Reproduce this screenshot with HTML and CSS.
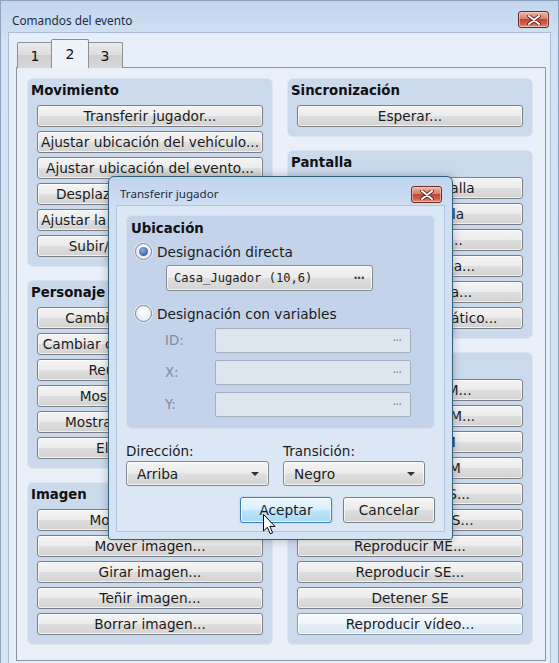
FILE: index.html
```html
<!DOCTYPE html>
<html lang="es">
<head>
<meta charset="utf-8">
<title>Comandos del evento</title>
<link rel="stylesheet" href="styles.css">
</head>
<body>
<div class="win">
  <div class="titlebar">
    <span class="title">Comandos del evento</span>
    <span class="close-btn main-close">
      <svg width="14" height="10" viewBox="0 0 14 10"><path d="M2 1 L12 9 M12 1 L2 9" stroke="#5a1f18" stroke-width="3.6" stroke-linecap="round"/><path d="M2 1 L12 9 M12 1 L2 9" stroke="#fff" stroke-width="2" stroke-linecap="round"/></svg>
    </span>
  </div>
  <div class="client">
    <div class="tabs">
      <div class="tab">1</div>
      <div class="tab active">2</div>
      <div class="tab">3</div>
    </div>
    <div class="panel">
      <div class="col">
        <div class="group">
          <div class="ghead">Movimiento</div>
          <div class="btns">
            <div class="btn">Transferir jugador...</div>
            <div class="btn">Ajustar ubicación del vehículo...</div>
            <div class="btn">Ajustar ubicación del evento...</div>
            <div class="btn">Desplazamiento de mapa...</div>
            <div class="btn">Ajustar la ruta de movimiento...</div>
            <div class="btn">Subir/Bajar del vehículo</div>
          </div>
        </div>
        <div class="group">
          <div class="ghead">Personaje</div>
          <div class="btns">
            <div class="btn">Cambiar transparencia...</div>
            <div class="btn">Cambiar comitiva del jugador...</div>
            <div class="btn">Reunir seguidores</div>
            <div class="btn">Mostrar animación...</div>
            <div class="btn">Mostrar icono de globo...</div>
            <div class="btn">Eliminar evento</div>
          </div>
        </div>
        <div class="group">
          <div class="ghead">Imagen</div>
          <div class="btns">
            <div class="btn">Mostrar imagen...</div>
            <div class="btn">Mover imagen...</div>
            <div class="btn">Girar imagen...</div>
            <div class="btn">Teñir imagen...</div>
            <div class="btn">Borrar imagen...</div>
          </div>
        </div>
      </div>
      <div class="col">
        <div class="group">
          <div class="ghead">Sincronización</div>
          <div class="btns">
            <div class="btn">Esperar...</div>
          </div>
        </div>
        <div class="group">
          <div class="ghead">Pantalla</div>
          <div class="btns">
            <div class="btn">Oscurecer pantalla</div>
            <div class="btn">Aclarar pantalla</div>
            <div class="btn">Teñir pantalla...</div>
            <div class="btn">Flash de pantalla...</div>
            <div class="btn">Sacudir pantalla...</div>
            <div class="btn">Ajustar efecto climático...</div>
          </div>
        </div>
        <div class="group">
          <div class="ghead">Audio y vídeo</div>
          <div class="btns">
            <div class="btn">Reproducir BGM...</div>
            <div class="btn">Desvanecer BGM...</div>
            <div class="btn">Guardar BGM</div>
            <div class="btn">Reanudar BGM</div>
            <div class="btn">Reproducir BGS...</div>
            <div class="btn">Desvanecer BGS...</div>
            <div class="btn">Reproducir ME...</div>
            <div class="btn">Reproducir SE...</div>
            <div class="btn">Detener SE</div>
            <div class="btn hover">Reproducir vídeo...</div>
          </div>
        </div>
      </div>
    </div>
  </div>
</div>

<div class="dialog">
  <div class="dtitlebar">
    <span class="dtitle">Transferir jugador</span>
    <span class="close-btn dclose">
      <svg width="14" height="10" viewBox="0 0 14 10"><path d="M2 1 L12 9 M12 1 L2 9" stroke="#5a1f18" stroke-width="3.6" stroke-linecap="round"/><path d="M2 1 L12 9 M12 1 L2 9" stroke="#fff" stroke-width="2" stroke-linecap="round"/></svg>
    </span>
  </div>
  <div class="dclient">
    <div class="gbox">
      <div class="gbhead">Ubicación</div>
      <div class="radio-row"><span class="radio checked"></span><span>Designación directa</span></div>
      <div class="field"><span class="mono">Casa_Jugador (10,6)</span><span class="dots">···</span></div>
      <div class="radio-row second"><span class="radio"></span><span>Designación con variables</span></div>
      <div class="vars">
        <span class="vlabel">ID:</span><div class="vfield"><span class="dots">···</span></div>
        <span class="vlabel">X:</span><div class="vfield"><span class="dots">···</span></div>
        <span class="vlabel">Y:</span><div class="vfield"><span class="dots">···</span></div>
      </div>
    </div>
    <div class="combos">
      <div class="ccol left">
        <div class="clabel">Dirección:</div>
        <div class="combo"><span>Arriba</span><span class="arrow"></span></div>
      </div>
      <div class="ccol right">
        <div class="clabel">Transición:</div>
        <div class="combo"><span>Negro</span><span class="arrow"></span></div>
      </div>
    </div>
    <div class="actions">
      <div class="dbtn default">Aceptar</div>
      <div class="dbtn">Cancelar</div>
    </div>
  </div>
</div>

<svg class="cursor" width="13" height="21" viewBox="0 0 13 21">
  <path d="M0.5 0.5 L0.5 17 L4.4 13.3 L7.2 19.8 L9.6 18.8 L6.9 12.4 L12 12.4 Z" fill="#fff" stroke="#000" stroke-width="1" stroke-linejoin="miter"/>
</svg>
</body>
</html>
```

FILE: styles.css
```css
* { box-sizing: border-box; }
html, body { margin: 0; padding: 0; }
body {
  width: 559px;
  height: 663px;
  overflow: hidden;
  position: relative;
  font-family: "DejaVu Sans", sans-serif;
  font-size: 13.7px;
  color: #1b1b1b;
  background: #cfdef1;
}

.win {
  width: 559px;
  height: 663px;
  background: linear-gradient(#c2d5ed, #d3e2f4 40px, #d6e4f5);
  border-left: 1px solid #8da2bd;
  border-top: 1px solid #8da2bd;
  border-right: 1px solid #8da2bd;
  display: flex;
  flex-direction: column;
}

.titlebar {
  height: 31px;
  display: flex;
  align-items: flex-start;
  justify-content: space-between;
  padding: 0 9px 0 11px;
}
.title {
  font-family: "Noto Sans", sans-serif;
  font-size: 11.8px;
  color: #1c2c44;
  margin-top: 11px;
}

.close-btn {
  display: flex;
  align-items: center;
  justify-content: center;
  width: 31px;
  height: 17px;
  border: 1px solid #6b2b25;
  border-radius: 3px;
  background: linear-gradient(#ebb2a6, #d9816f 45%, #c64532 50%, #d0604c 80%, #e29a88);
  box-shadow: inset 0 0 0 1px rgba(255, 220, 210, 0.55);
}
.main-close { margin-top: 10px; }

.client {
  flex: 1;
  margin: 0 7px;
  background: #e6eef9;
  border: 1px solid #a9bdd6;
  border-bottom: none;
  padding: 7px 0 0 7px;
}

.tabs {
  display: flex;
  align-items: flex-end;
  height: 28px;
  margin-bottom: -1px;
  padding-left: 1px;
  position: relative;
  z-index: 1;
}
.tab {
  width: 36px;
  height: 26px;
  border: 1px solid #8a8f98;
  border-bottom: none;
  border-radius: 2px 2px 0 0;
  background: linear-gradient(#eaeaea, #dcdcdc 50%, #cfcfcf 50%, #d8d8d8);
  display: flex;
  align-items: center;
  justify-content: center;
  font-size: 14px;
  color: #111;
  margin-right: -1px;
}
.tab.active {
  height: 29px;
  background: #eef3fa;
  border-color: #8a8f98;
  position: relative;
  z-index: 2;
  margin-left: -1px;
  margin-right: -2px;
  width: 38px;
}

.panel {
  width: 530px;
  height: 594px;
  background: #e9f0f9;
  border: 1px solid #8d939c;
  padding: 10px 12px 0 10px;
  display: flex;
  gap: 14px;
  align-items: flex-start;
}

.col {
  width: 246px;
  display: flex;
  flex-direction: column;
  gap: 13px;
}

.group {
  background: #cbd9ed;
  border-radius: 6px;
  border: 1px solid #dbe5f2;
  padding: 2px 0 9px;
}
.ghead {
  font-weight: bold;
  font-size: 13.3px;
  line-height: 20px;
  padding-left: 3px;
  margin-bottom: 4px;
  color: #111;
}
.btns {
  display: flex;
  flex-direction: column;
  gap: 4px;
  padding: 0 9px;
}
.btn {
  height: 22px;
  line-height: 20px;
  text-align: center;
  white-space: nowrap;
  overflow: hidden;
  border: 1px solid #7b7f85;
  border-radius: 3px;
  background: linear-gradient(#f4f4f4, #ececec 48%, #dedede 52%, #d2d2d2);
  box-shadow: inset 0 0 0 1px rgba(255, 255, 255, 0.7);
}
.btn.hover {
  background: linear-gradient(#f7fbfe, #eef5fb 48%, #e3eef8 52%, #dae8f4);
  border-color: #8a9db3;
}

/* Dialog */
.dialog {
  position: absolute;
  left: 108px;
  top: 176px;
  width: 345px;
  height: 364px;
  border: 1px solid #2f5f7a;
  border-radius: 6px 6px 3px 3px;
  background: linear-gradient(#c0d4ed, #cfdff2 30px, #d4e3f4);
  box-shadow: 0 0 10px rgba(0, 0, 0, 0.25);
  display: flex;
  flex-direction: column;
  padding: 0 7px 7px;
  z-index: 5;
}
.dtitlebar {
  height: 28px;
  display: flex;
  align-items: flex-start;
  justify-content: space-between;
  padding: 0 3px 0 4px;
}
.dtitle {
  font-family: "Noto Sans", sans-serif;
  font-size: 11.6px;
  color: #1c2c44;
  margin-top: 9px;
}
.dclose { margin-top: 9px; }

.dclient {
  flex: 1;
  background: #dce7f5;
  border: 1px solid #b3c6dd;
  padding: 9px 9px 0 9px;
  display: flex;
  flex-direction: column;
}

.gbox {
  background: #c3d3e9;
  border-radius: 6px;
  border: 1px solid #d4e0ef;
  padding: 3px 0 7px 0;
  height: 214px;
}
.gbhead {
  font-weight: bold;
  font-size: 13.3px;
  line-height: 20px;
  padding-left: 4px;
  color: #111;
}
.radio-row {
  display: flex;
  align-items: center;
  height: 21px;
  margin-top: 2px;
  padding-left: 8px;
  gap: 5px;
}
.radio-row.second { margin-top: 12px; }
.radio {
  width: 17px;
  height: 17px;
  border-radius: 50%;
  border: 1px solid #7e8a99;
  background: radial-gradient(circle at 50% 40%, #ffffff, #eceff3 60%, #d9dee6);
  position: relative;
  box-shadow: 0 0 0 1px rgba(255, 255, 255, 0.5);
}
.radio.checked::after {
  content: "";
  position: absolute;
  left: 3px;
  top: 3px;
  width: 9px;
  height: 9px;
  border-radius: 50%;
  background: radial-gradient(circle at 40% 35%, #8fb1e2, #3c65aa 70%, #2c4f8e);
}

.field {
  margin: 3px 0 0 39px;
  width: 207px;
  height: 26px;
  border: 1px solid #868b92;
  border-radius: 3px;
  background: linear-gradient(#f3f3f3, #ebebeb 48%, #dedede 52%, #d4d4d4);
  box-shadow: inset 0 0 0 1px rgba(255, 255, 255, 0.7);
  display: flex;
  align-items: center;
  justify-content: space-between;
  padding: 0 8px 0 7px;
}
.mono {
  font-family: "DejaVu Sans Mono", monospace;
  font-size: 12.1px;
  color: #1b1b1b;
}
.dots {
  font-size: 12px;
  color: #444;
  letter-spacing: -1px;
  font-weight: bold;
}

.vars {
  display: grid;
  grid-template-columns: 50px 196px;
  row-gap: 7px;
  margin: 4px 0 0 38px;
  align-items: center;
}
.vlabel {
  color: #7f8b9c;
  font-size: 13.3px;
}
.vfield {
  height: 25px;
  border: 1px solid #a4b0bf;
  border-radius: 2px;
  background: #dde5ef;
  display: flex;
  align-items: center;
  justify-content: flex-end;
  padding-right: 9px;
}
.vfield .dots { color: #7c8694; font-weight: normal; }

.combos {
  display: flex;
  gap: 14px;
  margin-top: 12px;
}
.ccol.left { width: 143px; }
.ccol.right { width: 142px; }
.clabel {
  line-height: 20px;
  font-size: 13.5px;
}
.combo {
  height: 25px;
  border: 1px solid #82878e;
  border-radius: 3px;
  background: linear-gradient(#f3f3f3, #ebebeb 48%, #dedede 52%, #d4d4d4);
  box-shadow: inset 0 0 0 1px rgba(255, 255, 255, 0.7);
  display: flex;
  align-items: center;
  justify-content: space-between;
  padding: 0 9px 0 10px;
}
.arrow {
  width: 0;
  height: 0;
  border-left: 4px solid transparent;
  border-right: 4px solid transparent;
  border-top: 4px solid #333;
}

.actions {
  display: flex;
  justify-content: flex-end;
  gap: 11px;
  margin-top: 11px;
}
.dbtn {
  width: 92px;
  height: 26px;
  border: 1px solid #7b7f85;
  border-radius: 3px;
  background: linear-gradient(#f4f4f4, #ececec 48%, #dedede 52%, #d2d2d2);
  box-shadow: inset 0 0 0 1px rgba(255, 255, 255, 0.7);
  display: flex;
  align-items: center;
  justify-content: center;
  font-size: 13.7px;
}
.dbtn.default {
  border-color: #3c7fb1;
  background: linear-gradient(#eaf6fd, #d9f0fc 48%, #bee6fd 52%, #a7d9f5);
  box-shadow: inset 0 0 0 1px rgba(255, 255, 255, 0.8), 0 0 2px rgba(80, 170, 230, 0.5);
}

.cursor {
  position: absolute;
  left: 263px;
  top: 514px;
  z-index: 10;
}
```
